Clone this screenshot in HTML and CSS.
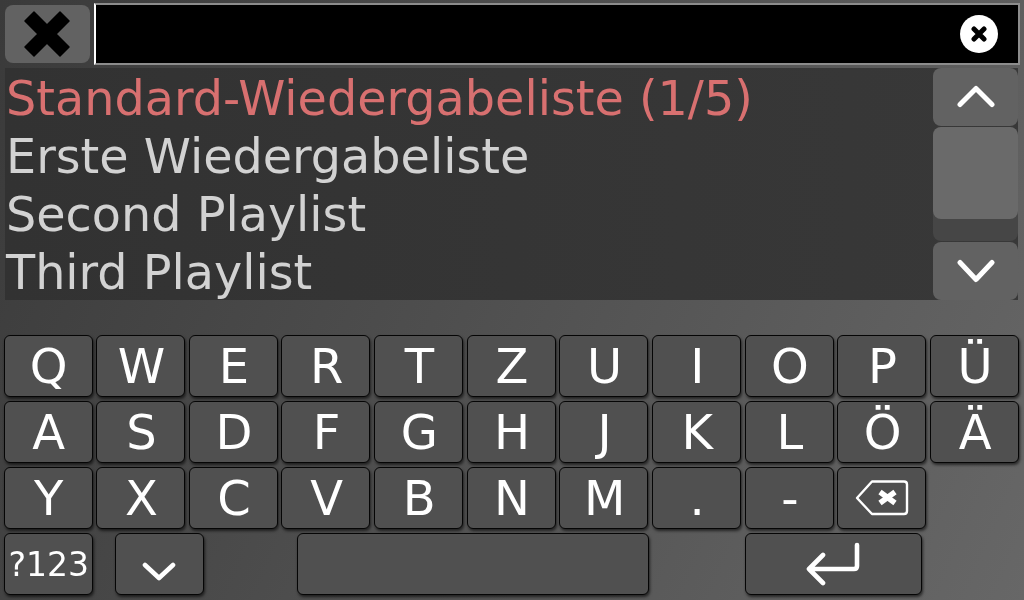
FILE: index.html
```html
<!DOCTYPE html>
<html lang="de">
<head>
    <meta charset="UTF-8">
    <title>Wiedergabeliste</title>
    <link rel="stylesheet" href="styles.css">
</head>
<body>
    <div class="top-bar">
        <button class="close-btn">
            <svg width="46" height="46" viewBox="0 0 46 46"><path d="M10 1 L23 14 L36 1 L45 10 L32 23 L45 36 L36 45 L23 32 L10 45 L1 36 L14 23 L1 10 Z" fill="#000" stroke="#000" stroke-width="1.5" stroke-linejoin="round"/></svg>
        </button>
        <div class="search-box">
            <span class="clear-btn">
                <svg width="16" height="16" viewBox="0 0 16 16"><path d="M3 3 L13 13 M13 3 L3 13" stroke="#000" stroke-width="5" stroke-linecap="round"/></svg>
            </span>
        </div>
    </div>

    <div class="list-area">
        <div class="list">
            <div class="list-item active">Standard-Wiedergabeliste (1/5)</div>
            <div class="list-item">Erste Wiedergabeliste</div>
            <div class="list-item">Second Playlist</div>
            <div class="list-item">Third Playlist</div>
        </div>
        <div class="scrollbar">
            <button class="scroll-btn">
                <svg width="38" height="24" viewBox="0 0 38 24"><path d="M3 19.5 L19 3.5 L35 19.5" fill="none" stroke="#fff" stroke-width="5" stroke-linecap="round" stroke-linejoin="round"/></svg>
            </button>
            <div class="scroll-track"><div class="scroll-thumb"></div></div>
            <button class="scroll-btn">
                <svg width="38" height="24" viewBox="0 0 38 24"><path d="M3 3.5 L19 20.5 L35 3.5" fill="none" stroke="#fff" stroke-width="5" stroke-linecap="round" stroke-linejoin="round"/></svg>
            </button>
        </div>
    </div>

    <div class="keyboard">
        <div class="key-row">
            <button class="key">Q</button><button class="key">W</button><button class="key">E</button><button class="key">R</button><button class="key">T</button><button class="key">Z</button><button class="key">U</button><button class="key">I</button><button class="key">O</button><button class="key">P</button><button class="key">Ü</button>
        </div>
        <div class="key-row">
            <button class="key">A</button><button class="key">S</button><button class="key">D</button><button class="key">F</button><button class="key">G</button><button class="key">H</button><button class="key">J</button><button class="key">K</button><button class="key">L</button><button class="key">Ö</button><button class="key">Ä</button>
        </div>
        <div class="key-row">
            <button class="key">Y</button><button class="key">X</button><button class="key">C</button><button class="key">V</button><button class="key">B</button><button class="key">N</button><button class="key">M</button><button class="key">.</button><button class="key">-</button>
            <button class="key key-icon">
                <svg width="54" height="36" viewBox="0 0 54 36"><path d="M17 1.5 H49 Q52 1.5 52 4.5 V31 Q52 34 49 34 H17 L2 18 Z" fill="none" stroke="#fff" stroke-width="2.4" stroke-linejoin="round"/><path d="M25 12 L40 23 M40 12 L25 23" stroke="#fff" stroke-width="5.5"/></svg>
            </button>
        </div>
        <div class="key-row">
            <button class="key key-small">?123</button>
            <button class="key key-icon key-hide">
                <svg width="34" height="22" viewBox="0 0 34 22"><path d="M3 4 L17 17 L31 4" fill="none" stroke="#fff" stroke-width="4.6" stroke-linecap="round" stroke-linejoin="round"/></svg>
            </button>
            <button class="key key-space"></button>
            <button class="key key-icon key-enter">
                <svg width="56" height="44" viewBox="0 0 56 44"><path d="M52 3 V24 Q52 27 49 27 H4 M18 13 L4 27 L18 41" fill="none" stroke="#fff" stroke-width="4.6" stroke-linecap="round" stroke-linejoin="round"/></svg>
            </button>
        </div>
    </div>
</body>
</html>
```

FILE: styles.css
```css
html, body {
    height: 100%;
}
body {
    margin: 0;
    width: 1024px;
    height: 600px;
    overflow: hidden;
    box-sizing: border-box;
    padding-top: 3px;
    font-family: "DejaVu Sans", sans-serif;
    background: linear-gradient(113deg, #3a3a3a 0%, #676767 100%);
}
button {
    font-family: inherit;
    padding: 0;
    border: none;
}
.top-bar {
    display: flex;
    height: 62px;
    padding: 0 4px 0 5px;
    gap: 4px;
}
.close-btn {
    width: 85px;
    height: 58px;
    margin-top: 2px;
    padding-right: 2px;
    background-color: #626262;
    border-radius: 8px;
    display: flex;
    align-items: center;
    justify-content: center;
}
.search-box {
    flex: 1;
    box-sizing: border-box;
    background-color: #000;
    border: 2px solid #8c8c8c;
    border-left-color: #fff;
    display: flex;
    align-items: center;
    justify-content: flex-end;
    padding-right: 20px;
}
.clear-btn {
    width: 38px;
    height: 38px;
    border-radius: 50%;
    background-color: #fff;
    display: flex;
    align-items: center;
    justify-content: center;
}
.list-area {
    display: flex;
    height: 232px;
    margin: 3px 6px 0 5px;
    background: linear-gradient(90deg, #323232, #383838);
}
.list {
    flex: 1;
    will-change: transform;
}
.list-item {
    height: 58px;
    line-height: 62px;
    font-size: 47.7px;
    padding-left: 1px;
    color: #d2d2d2;
    white-space: nowrap;
}
.list-item.active {
    color: #d87070;
}
.scrollbar {
    width: 85px;
    display: flex;
    flex-direction: column;
    gap: 1px;
}
.scroll-btn {
    height: 58px;
    background-color: #626262;
    border-radius: 8px;
    display: flex;
    align-items: center;
    justify-content: center;
}
.scroll-track {
    flex: 1;
    background-color: #464646;
    border-radius: 8px;
}
.scroll-thumb {
    height: 92px;
    background-color: #6a6a6a;
    border-radius: 8px;
}
.keyboard {
    display: flex;
    flex-direction: column;
    gap: 4px;
    margin-top: 35px;
    padding-left: 3.5px;
    will-change: transform;
}
.key-row {
    display: flex;
    gap: 3.65px;
}
.key {
    width: 89px;
    height: 62px;
    box-sizing: border-box;
    padding-left: 1.5px;
    background-color: #505050;
    border: 1px solid #050505;
    border-radius: 6px;
    box-shadow: 1px 2px 3px rgba(0, 0, 0, 0.6);
    color: #fff;
    font-size: 48px;
    display: flex;
    align-items: center;
    justify-content: center;
}
.key-icon {
    padding-left: 0;
}
.key-small {
    font-size: 33px;
}
.key-hide {
    margin-left: 18.85px;
    padding-top: 16px;
}
.key-space {
    width: 352px;
    margin-left: 89.35px;
}
.key-enter {
    width: 177px;
    margin-left: 92.35px;
}
```
